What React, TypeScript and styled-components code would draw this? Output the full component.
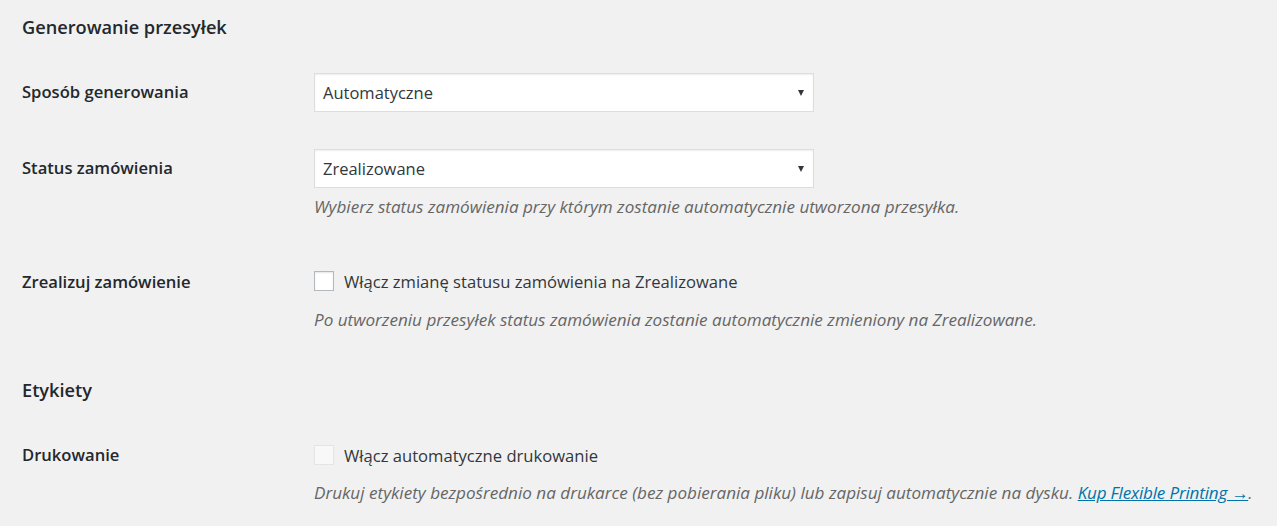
import React from "react";
import styled, { createGlobalStyle } from "styled-components";

const Global = createGlobalStyle`
  html, body { margin: 0; padding: 0; background: #f1f1f1; }
  body { font-family: "Open Sans", "Noto Sans", sans-serif; color: #23282d; }
`;

const Page = styled.div`
  padding: 0 0 0 22px;
  width: 1277px;
  box-sizing: border-box;
`;

const Heading = styled.h2<{ $top: number }>`
  margin: ${(p) => p.$top}px 0 0;
  font-size: 18.2px;
  font-weight: 600;
  line-height: 24px;
  color: #23282d;
`;

const Row = styled.div<{ $top: number }>`
  display: grid;
  grid-template-columns: 292px 1fr;
  margin-top: ${(p) => p.$top}px;
`;

const Label = styled.div<{ $pad: number }>`
  padding-top: ${(p) => p.$pad}px;
  font-size: 16.6px;
  font-weight: 600;
  line-height: 20px;
  color: #23282d;
`;

const Field = styled.div`
  display: flex;
  flex-direction: column;
  align-items: flex-start;
  min-width: 0;
`;

const SelectBox = styled.div`
  width: 500px;
  height: 39px;
  box-sizing: border-box;
  background: #fff;
  border: 1px solid #ddd;
  box-shadow: inset 0 1px 2px rgba(0, 0, 0, 0.07);
  display: flex;
  align-items: center;
  justify-content: space-between;
  padding: 0 8px 0 8px;
  font-size: 16.5px;
  color: #32373c;
`;

const Arrow = styled.span`
  width: 0;
  height: 0;
  border-left: 3.5px solid transparent;
  border-right: 3.5px solid transparent;
  border-top: 6px solid #32373c;
  margin-right: 1px;
`;

const Description = styled.p<{ $top: number }>`
  margin: ${(p) => p.$top}px 0 0;
  font-size: 17.1px;
  font-style: italic;
  line-height: 22px;
  color: #666;
  white-space: nowrap;
`;

const CheckLine = styled.label`
  display: flex;
  align-items: center;
  gap: 10px;
  height: 22px;
  font-size: 16.6px;
  color: #32373c;
`;

const Box = styled.span<{ $disabled?: boolean }>`
  width: 20px;
  height: 20px;
  box-sizing: border-box;
  background: ${(p) => (p.$disabled ? "rgba(255,255,255,0.5)" : "#fff")};
  border: 1px solid ${(p) => (p.$disabled ? "rgba(222,222,222,0.75)" : "#b4b9be")};
  box-shadow: ${(p) => (p.$disabled ? "none" : "inset 0 1px 2px rgba(0,0,0,0.1)")};
`;

const Link = styled.a`
  color: #0073aa;
  text-decoration: underline;
  letter-spacing: -0.2px;
`;

export default function App() {
  return (
    <>
      <Global />
      <Page>
        <Heading $top={15}>Generowanie przesyłek</Heading>

        <Row $top={34}>
          <Label $pad={9}>Sposób generowania</Label>
          <Field>
            <SelectBox>
              <span>Automatyczne</span>
              <Arrow />
            </SelectBox>
          </Field>
        </Row>

        <Row $top={37}>
          <Label $pad={9}>Status zamówienia</Label>
          <Field>
            <SelectBox>
              <span>Zrealizowane</span>
              <Arrow />
            </SelectBox>
            <Description $top={8}>
              Wybierz status zamówienia przy którym zostanie automatycznie utworzona przesyłka.
            </Description>
          </Field>
        </Row>

        <Row $top={52}>
          <Label $pad={2}>Zrealizuj zamówienie</Label>
          <Field>
            <CheckLine>
              <Box />
              Włącz zmianę statusu zamówienia na Zrealizowane
            </CheckLine>
            <Description $top={17}>
              Po utworzeniu przesyłek status zamówienia zostanie automatycznie zmieniony na Zrealizowane.
            </Description>
          </Field>
        </Row>

        <Heading $top={47}>Etykiety</Heading>

        <Row $top={42}>
          <Label $pad={1}>Drukowanie</Label>
          <Field>
            <CheckLine>
              <Box $disabled />
              Włącz automatyczne drukowanie
            </CheckLine>
            <Description $top={16}>
              Drukuj etykiety bezpośrednio na drukarce (bez pobierania pliku) lub zapisuj automatycznie na dysku.{" "}
              <Link href="#">Kup Flexible Printing →</Link>.
            </Description>
          </Field>
        </Row>
      </Page>
    </>
  );
}
